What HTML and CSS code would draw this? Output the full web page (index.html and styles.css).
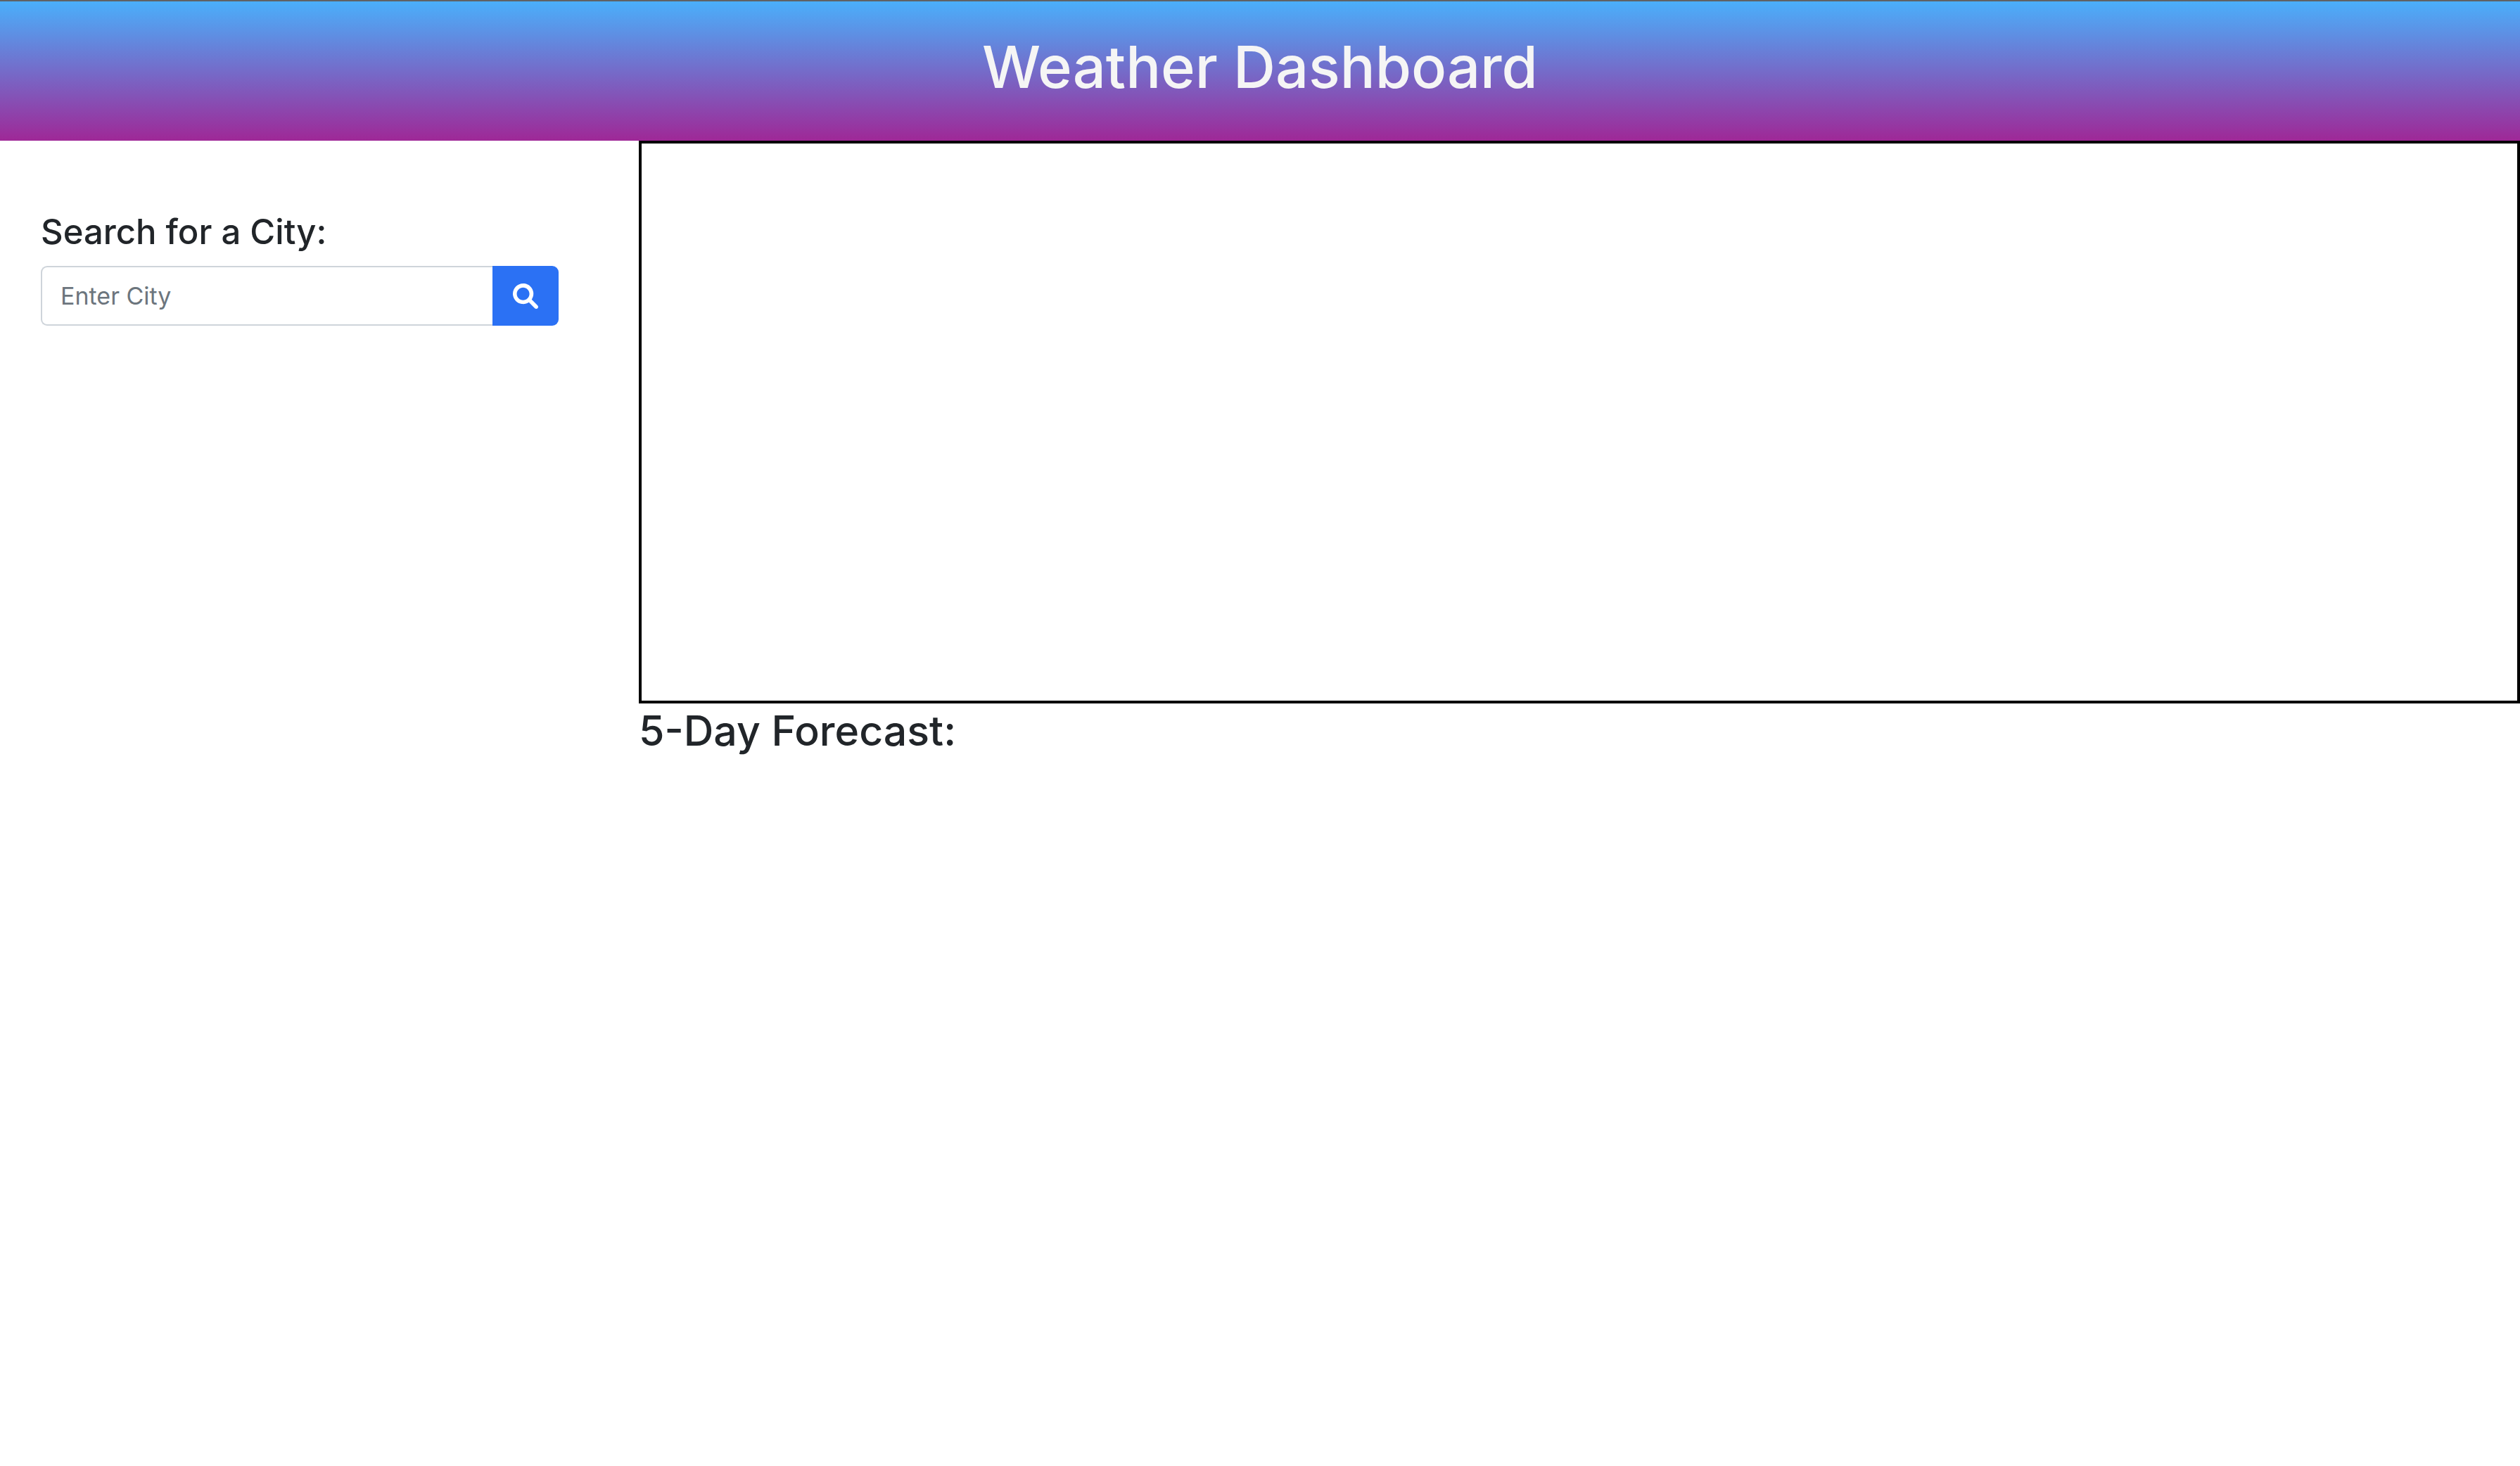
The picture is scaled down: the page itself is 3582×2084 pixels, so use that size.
FILE: index.html
```html
<!DOCTYPE html>
<html lang="en">
<head>
  <meta charset="UTF-8">
  <meta name="viewport" content="width=device-width, initial-scale=1">
  <title>Weather Dashboard</title>
  <link rel="stylesheet" href="styles.css">
</head>
<body>
  <header class="page-header">
    <h1>Weather Dashboard</h1>
  </header>
  <main class="layout">
    <form class="search">
      <label class="search-title" for="city">Search for a City:</label>
      <div class="input-group">
        <input class="city-input" id="city" type="text" placeholder="Enter City">
        <button class="search-button" type="submit" aria-label="Search">
          <svg class="search-icon" viewBox="0 0 512 512" aria-hidden="true">
            <path fill="currentColor" d="M500.3 443.7l-119.700-119.700c27.220-40.410 40.650-90.900 33.460-144.700C401.800 87.790 326.800 13.320 235.200 1.723C99.010-15.510-15.510 99.010 1.724 235.200c11.600 91.640 86.080 166.700 177.600 178.900c53.800 7.189 104.300-6.236 144.700-33.460l119.700 119.700c15.620 15.620 40.950 15.620 56.570 0C515.900 484.700 515.900 459.300 500.300 443.700zM79.100 208c0-70.580 57.420-128 128-128s128 57.420 128 128c0 70.580-57.420 128-128 128S79.100 278.600 79.100 208z"/>
          </svg>
        </button>
      </div>
    </form>
    <div class="results">
      <section class="current-weather" aria-label="Current weather"></section>
      <h2>5-Day Forecast:</h2>
    </div>
  </main>
</body>
</html>
```
FILE: styles.css
```css
*,
*::before,
*::after {
  box-sizing: border-box;
}

body {
  margin: 0;
  background: #fff;
  color: #212529;
  font-family: Inter, "Liberation Sans", sans-serif;
  font-size: 34px;
}

h1,
h2 {
  margin: 0;
  font-weight: 500;
}

.page-header {
  padding: 40px 24px 52px;
  border-top: 2px solid #606264;
  background: linear-gradient(#4aaffb, #9f2897);
  color: #f5f5f5;
  text-align: center;
}

h1 {
  font-size: 83px;
  line-height: 106px;
}

.layout {
  display: grid;
  grid-template-columns: 908px 1fr;
}

.search {
  padding: 98px 114px 0 58px;
}

.search-title {
  display: block;
  margin-bottom: 16px;
  font-size: 49px;
  font-weight: 500;
  line-height: 64px;
}

.input-group {
  display: flex;
  height: 85px;
}

.city-input {
  flex: 1;
  min-width: 0;
  padding: 0 26px;
  border: 2px solid #ced4da;
  border-right: 0;
  border-radius: 9px 0 0 9px;
  background: #fff;
  color: inherit;
  font: inherit;
}

.city-input::placeholder {
  color: #6c757d;
  opacity: 1;
}

.search-button {
  display: flex;
  align-items: center;
  justify-content: center;
  width: 94px;
  padding: 0;
  border: 0;
  border-radius: 0 9px 9px 0;
  background: #2b71f4;
  color: #fff;
}

.search-icon {
  width: 36px;
  height: 36px;
}

.current-weather {
  height: 800px;
  border: 4px solid #000;
}

h2 {
  font-size: 59px;
  line-height: 78px;
}
```
